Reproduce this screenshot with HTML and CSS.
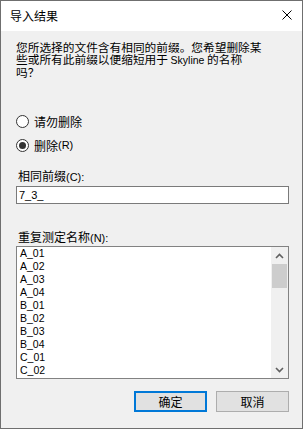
FILE: index.html
```html
<!DOCTYPE html>
<html lang="zh-CN">
<head>
    <meta charset="UTF-8">
    <title>导入结果</title>
    <link rel="stylesheet" href="styles.css">
</head>
<body>
    <div class="window">
        <!-- Title bar -->
        <div class="titlebar">
            <span class="title">导入结果</span>
            <svg class="close" width="10" height="10" viewBox="0 0 10 10">
                <path d="M0.5 0.5 L9.5 9.5 M9.5 0.5 L0.5 9.5" stroke="#000" stroke-width="1" fill="none"/>
            </svg>
        </div>

        <div class="content">
            <p class="message">您所选择的文件含有相同的前缀。您希望删除某<br>些或所有此前缀以便缩短用于 <span class="latin">Skyline</span> 的名称<br>吗？</p>

            <!-- Options -->
            <div class="radios">
                <label class="radio"><span class="circle"></span>请勿删除</label>
                <label class="radio"><span class="circle checked"></span>删除<span class="latin">(R)</span></label>
            </div>

            <label class="field-label">相同前缀<span class="latin">(C):</span></label>
            <div class="textbox">7_3_</div>

            <label class="field-label list-label">重复测定名称<span class="latin">(N):</span></label>
            <div class="listbox">
                <ul class="items">
                    <li>A_01</li>
                    <li>A_02</li>
                    <li>A_03</li>
                    <li>A_04</li>
                    <li>B_01</li>
                    <li>B_02</li>
                    <li>B_03</li>
                    <li>B_04</li>
                    <li>C_01</li>
                    <li>C_02</li>
                </ul>
                <div class="scrollbar">
                    <div class="arrow">
                        <svg width="9" height="6" viewBox="0 0 9 6"><path d="M1 5 L4.5 1.5 L8 5" stroke="#606060" stroke-width="1.6" fill="none"/></svg>
                    </div>
                    <div class="thumb"></div>
                    <div class="track"></div>
                    <div class="arrow">
                        <svg width="9" height="6" viewBox="0 0 9 6"><path d="M1 1 L4.5 4.5 L8 1" stroke="#606060" stroke-width="1.6" fill="none"/></svg>
                    </div>
                </div>
            </div>

            <!-- Buttons -->
            <div class="buttons">
                <button class="btn default">确定</button>
                <button class="btn">取消</button>
            </div>
        </div>
    </div>
</body>
</html>
```

FILE: styles.css
```css
/* Base */
* {
    margin: 0;
    padding: 0;
    box-sizing: border-box;
}
body {
    font-family: "Noto Sans CJK SC", "Liberation Sans", sans-serif;
    font-size: 12px;
    color: #000;
    background: #fff;
}

.latin {
    font-family: "Liberation Sans", sans-serif;
    font-size: 11px;
    line-height: 1;
}

/* Window */
.window {
    width: 303px;
    height: 429px;
    border: 1px solid #6f6f6f;
    background: #f0f0f0;
    display: flex;
    flex-direction: column;
}

.titlebar {
    height: 30px;
    background: #fff;
    display: flex;
    align-items: center;
    justify-content: space-between;
    padding: 0 10px 0 9px;
}
.title {
    line-height: 14px;
    margin-top: -1px;
}
.close {
    margin-top: -2px;
}

/* Content */
.content {
    flex: 1;
    padding: 10px 13px 0 15px;
    display: flex;
    flex-direction: column;
}

.message {
    white-space: nowrap;
    font-size: 11.7px;
    line-height: 12.3px;
}
.message .latin {
    font-size: 10.5px;
}

.radios {
    margin-top: 31px;
}
.radio {
    height: 24px;
    display: flex;
    align-items: center;
}
.circle {
    width: 13px;
    height: 13px;
    border: 1px solid #333;
    border-radius: 50%;
    background: #fff;
    margin-right: 5px;
    display: flex;
    align-items: center;
    justify-content: center;
}
.circle.checked::after {
    content: "";
    width: 7px;
    height: 7px;
    border-radius: 50%;
    background: #333;
}

.field-label {
    display: block;
    line-height: 14px;
    margin-top: 12px;
    padding-left: 2px;
}
.list-label {
    margin-top: 26px;
}

.textbox {
    margin-top: 3px;
    height: 18px;
    background: #fff;
    border: 1px solid #7a7a7a;
    padding-left: 2px;
    font-family: "Liberation Sans", sans-serif;
    font-size: 11px;
    line-height: 16px;
}

/* List box */
.listbox {
    margin-top: 2px;
    height: 133px;
    background: #fff;
    border: 1px solid #828282;
    display: flex;
}
.items {
    flex: 1;
    list-style: none;
    padding: 0 0 0 3px;
    font-family: "Liberation Sans", sans-serif;
    font-size: 10.5px;
    line-height: 13px;
    overflow: hidden;
}
.scrollbar {
    width: 17px;
    background: #f0f0f0;
    display: flex;
    flex-direction: column;
}
.arrow {
    height: 17px;
    display: flex;
    align-items: center;
    justify-content: center;
}
.thumb {
    height: 24px;
    margin: 0 1px;
    background: #cdcdcd;
}
.track {
    flex: 1;
}

/* Buttons */
.buttons {
    margin-top: 12px;
    display: flex;
    justify-content: flex-end;
    gap: 9px;
}
.btn {
    width: 73px;
    height: 21px;
    background: #e1e1e1;
    border: 1px solid #adadad;
    font-family: "Noto Sans CJK SC", sans-serif;
    font-size: 12px;
    line-height: 17px;
    color: #000;
}
.btn.default {
    border: 2px solid #0078d7;
}
```
